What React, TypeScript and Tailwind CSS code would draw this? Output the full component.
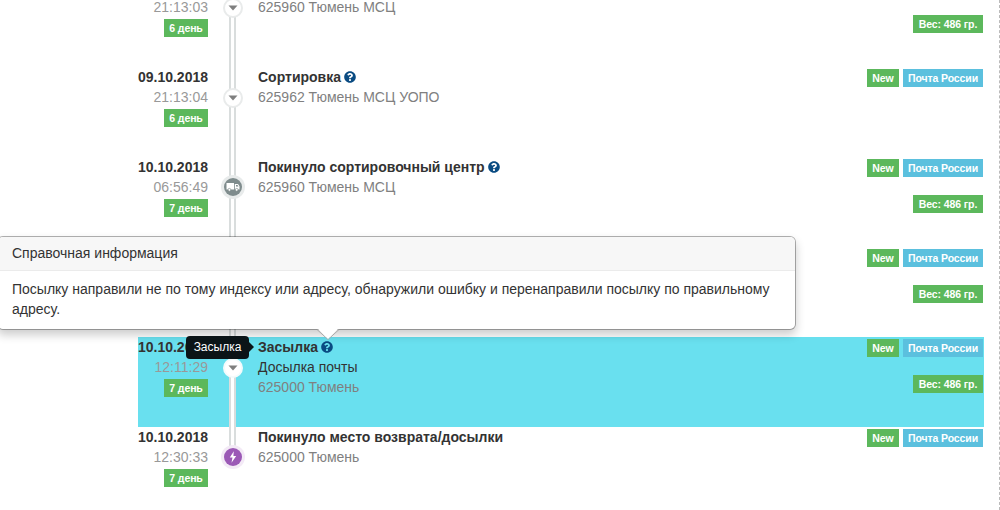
import React from "react";
import { FaQuestionCircle } from "react-icons/fa";

type Marker = "arrow" | "truck" | "bolt";

interface TrackEvent {
  date: string;
  time: string;
  day: string;
  title: string;
  note?: string;
  place: string;
  marker: Marker;
  help?: boolean;
  weight?: boolean;
  active?: boolean;
}

const events: TrackEvent[] = [
  { date: "09.10.2018", time: "21:13:03", day: "6 день", title: "", place: "625960 Тюмень МСЦ", marker: "arrow", weight: true },
  { date: "09.10.2018", time: "21:13:04", day: "6 день", title: "Сортировка", place: "625962 Тюмень МСЦ УОПО", marker: "arrow", help: true },
  { date: "10.10.2018", time: "06:56:49", day: "7 день", title: "Покинуло сортировочный центр", place: "625960 Тюмень МСЦ", marker: "truck", help: true, weight: true },
  { date: "", time: "", day: "", title: "", place: "", marker: "arrow", weight: true },
  { date: "10.10.2018", time: "12:11:29", day: "7 день", title: "Засылка", note: "Досылка почты", place: "625000 Тюмень", marker: "arrow", help: true, weight: true, active: true },
  { date: "10.10.2018", time: "12:30:33", day: "7 день", title: "Покинуло место возврата/досылки", place: "625000 Тюмень", marker: "bolt" },
];

const Label = ({ color, children }: { color: string; children: React.ReactNode }) => (
  <span
    className={`flex h-[18px] items-center justify-center whitespace-nowrap text-[10.5px] font-bold leading-none tracking-[-0.1px] text-white ${color}`}
  >
    {children}
  </span>
);

const MarkerIcon = ({ marker, active }: { marker: Marker; active?: boolean }) => {
  if (marker === "arrow") {
    return (
      <div
        className={`absolute -left-[8.5px] top-[21px] flex h-5 w-5 items-center justify-center rounded-full border-2 bg-white ${
          active ? "border-[#f3fbfc]" : "border-[#e9ebeb]"
        }`}
      >
        <svg width="10" height="6" viewBox="0 0 10 6">
          <path d="M0.5 0.5h9L5 5.5z" fill="#7f7f7f" />
        </svg>
      </div>
    );
  }
  return (
    <div
      className={`absolute -left-[7.5px] top-[21px] flex h-[18px] w-[18px] items-center justify-center rounded-full ring-3 ${
        marker === "truck" ? "bg-[#7f8c8d] ring-[#e8ebeb]" : "bg-[#9b59b6] ring-[#f3eaf6]"
      }`}
    >
      {marker === "truck" ? (
        <svg className="shrink-0" width="14" height="10" viewBox="0 0 14 10">
          <path d="M0.5 1h7.5v6.5H0.5zM8.8 2h3.2l1.5 2.2v3.3H8.8z" fill="#fff" />
          <path d="M10 3h1.5l1 1.6H10z" fill="#7f8c8d" />
          <circle cx="3.4" cy="7.8" r="1.4" fill="#fff" stroke="#7f8c8d" strokeWidth="0.7" />
          <circle cx="10.7" cy="7.8" r="1.4" fill="#fff" stroke="#7f8c8d" strokeWidth="0.7" />
        </svg>
      ) : (
        <svg className="shrink-0" width="8" height="12" viewBox="0 0 8 12">
          <path d="M4.8 0.3L0.8 6.5h2.7L2.5 11.7L7.2 5H4.4z" fill="#fff" />
        </svg>
      )}
    </div>
  );
};

const EventRow = ({ event, last }: { event: TrackEvent; last: boolean }) => (
  <div className={`flex h-[90px] ${event.active ? "bg-[#69e0ef]" : ""}`}>
    <div className="flex w-[70px] flex-col items-end">
      <b className="h-5">{event.date}</b>
      <span className="h-5 text-[#999]">{event.time}</span>
      {event.day && (
        <div className="mt-[2px]">
          <Label color="bg-[#5cb85c] w-11">{event.day}</Label>
        </div>
      )}
    </div>

    <div className="flex w-[50px] justify-center">
      <div className={`relative -ml-px w-[7px] border-x-2 border-[#d9dddd] bg-white ${last ? "h-[30px]" : "h-full"}`}>
        <MarkerIcon marker={event.marker} active={event.active} />
      </div>
    </div>

    <div className="flex-1">
      <div className="flex h-5 items-center">
        <b>{event.title}</b>
        {event.help && <FaQuestionCircle className="ml-[3px] text-[#0a4b82]" size={12} />}
      </div>
      {event.note && <div className="h-5">{event.note}</div>}
      <div className="h-5 text-[#808080]">{event.place}</div>
    </div>

    <div className="mr-px flex flex-col items-end gap-[18px] pt-[2px]">
      <div className="flex gap-1">
        <Label color="bg-[#5cb85c] w-8">New</Label>
        <Label color="bg-[#5bc0de] w-20">Почта России</Label>
      </div>
      {event.weight && <Label color="bg-[#5cb85c] w-[70px]">Вес: 486 гр.</Label>}
    </div>
  </div>
);

const HelpPopover = () => (
  <div className="absolute -left-[3px] top-[236px] w-[799px] rounded-md border border-black/30 bg-white bg-clip-padding shadow-[0_5px_10px_rgba(0,0,0,0.2)]">
    <h3 className="rounded-t-[5px] border-b border-[#ebebeb] bg-[#f7f7f7] px-[14px] py-2 leading-[17px]">
      Справочная информация
    </h3>
    <p className="px-[14px] pb-[10px] pt-2">
      Посылку направили не по тому индексу или адресу, обнаружили ошибку и перенаправили посылку по правильному
      <br />
      адресу.
    </p>
    <svg className="absolute left-[319px] top-full" width="22" height="11" viewBox="0 0 22 11" overflow="visible">
      <path d="M0 0.5L11 10.5L22 0.5" fill="none" stroke="#aaa" strokeWidth="1" />
      <path d="M1 -1h20v1L11 10L1 0z" fill="#fff" />
    </svg>
  </div>
);

const Tooltip = () => (
  <div className="absolute left-[186px] top-[336px] flex h-[23px] w-[63px] items-center justify-center rounded bg-[#0b1417] pb-px text-xs text-white">
    Засылка
    <svg className="absolute left-full top-[6px]" width="5" height="10" viewBox="0 0 5 10">
      <path d="M0 0l5 5-5 5z" fill="#0b1417" />
    </svg>
  </div>
);

const App = () => {
  return (
    <div className="relative h-[510px] w-[1000px] overflow-hidden border-r border-dashed border-[#bbb] bg-white font-['Liberation_Sans',Arial,sans-serif] text-sm leading-5 text-[#333]">
      <div className="-mt-[23px] ml-[138px] w-[846px]">
        {events.map((event, i) => (
          <EventRow key={i} event={event} last={i === events.length - 1} />
        ))}
      </div>
      <HelpPopover />
      <Tooltip />
    </div>
  );
};

export default App;
